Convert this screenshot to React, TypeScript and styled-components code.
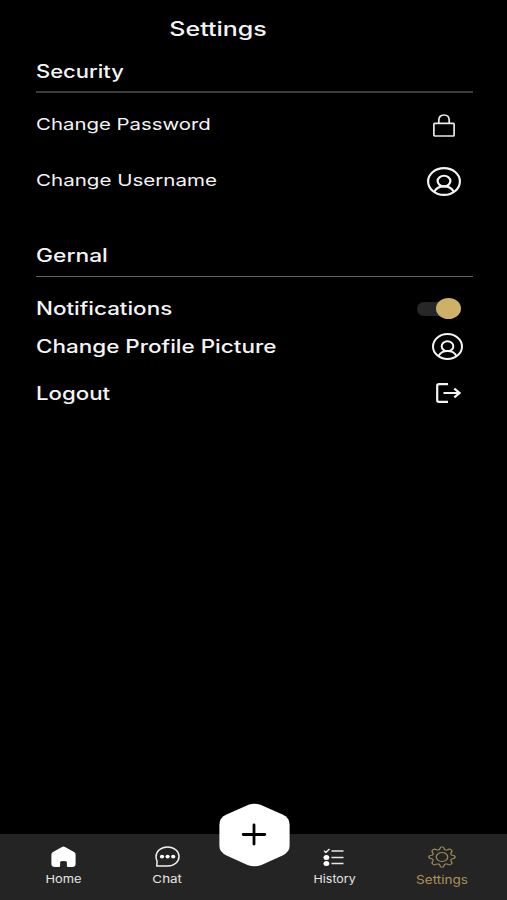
import React, {FC, ReactNode} from 'react';
import styled, {createGlobalStyle} from "styled-components";

export default function App() {
    return (
        <Screen>
            <GlobalStyle/>
            <Header>
                <Text as="h1" $size={19.5} $weight={500} $stretch={1.28} $center>Settings</Text>
            </Header>
            <Section $height={185}>
                <SectionTitle $line={2}>
                    <Text as="h2" $size={18} $weight={500} $stretch={1.22}>Security</Text>
                </SectionTitle>
                <List $top={4}>
                    <SettingsRow label="Change Password" size={16.5} weight={400} stretch={1.235} height={56} end={18}>
                        <LockIcon/>
                    </SettingsRow>
                    <SettingsRow label="Change Username" size={16.5} weight={400} stretch={1.245} height={56} end={12}>
                        <UserIcon width={34} height={29}/>
                    </SettingsRow>
                </List>
            </Section>
            <Section>
                <SectionTitle $line={1}>
                    <Text as="h2" $size={18} $weight={500} $stretch={1.265}>Gernal</Text>
                </SectionTitle>
                <List $top={13}>
                    <SettingsRow label="Notifications" size={18} weight={500} stretch={1.245} height={37} end={12}>
                        <Toggle role="switch" aria-checked="true">
                            <Thumb/>
                        </Toggle>
                    </SettingsRow>
                    <SettingsRow label="Change Profile Picture" size={18} weight={500} stretch={1.248} height={38} end={10} drop={2}>
                        <UserIcon width={31} height={27}/>
                    </SettingsRow>
                    <SettingsRow label="Logout" size={18} weight={500} stretch={1.235} height={56} end={12} drop={2}>
                        <LogoutIcon/>
                    </SettingsRow>
                </List>
            </Section>
            <NavBar>
                <NavItem $gap={5}>
                    <HomeIcon/>
                    <Text $size={11} $weight={400} $stretch={1.17} $center>Home</Text>
                </NavItem>
                <NavItem $gap={4.5}>
                    <ChatIcon/>
                    <Text $size={11} $weight={400} $stretch={1.22} $center>Chat</Text>
                </NavItem>
                <span/>
                <NavItem $gap={5} $iconShift={3}>
                    <HistoryIcon/>
                    <Text $size={11} $weight={400} $stretch={1.13} $center>History</Text>
                </NavItem>
                <NavItem $gap={6} $iconShift={2} $active>
                    <GearIcon/>
                    <Text $size={11.5} $weight={400} $stretch={1.18} $center>Settings</Text>
                </NavItem>
                <AddButton aria-label="Add">
                    <HexagonIcon/>
                </AddButton>
            </NavBar>
        </Screen>
    );
}

type TSettingsRowProps = {
    label: string
    size: number
    weight: number
    stretch: number
    height: number
    end: number
    drop?: number
    children: ReactNode
}

const SettingsRow: FC<TSettingsRowProps> = ({label, size, weight, stretch, height, end, drop, children}) => {
    return (
        <Row $height={height} $end={end}>
            <Text $size={size} $weight={weight} $stretch={stretch} $drop={drop}>{label}</Text>
            {children}
        </Row>
    );
};

const LockIcon = () => (
    <svg width="22" height="23" viewBox="0 0 22 23" fill="none" stroke="#e8e8e8" strokeWidth="1.7">
        <rect x="0.9" y="9.3" width="20.2" height="12.7" rx="0.8"/>
        <path d="M5.8 9.3V6.2C5.8 3 8 1 11 1s5.2 2 5.2 5.2v3.1"/>
    </svg>
);

const UserIcon: FC<{ width: number, height: number }> = ({width, height}) => (
    <svg width={width} height={height} viewBox="0 0 34 30" preserveAspectRatio="none" fill="none" stroke="#f4f4f4" strokeWidth="2.2">
        <ellipse cx="17" cy="15" rx="15.9" ry="13.8"/>
        <ellipse cx="17" cy="14.6" rx="6.4" ry="5.5"/>
        <path d="M7.2 25.6C9 21.8 12.8 20 17 20s8 1.8 9.8 5.6"/>
    </svg>
);

const LogoutIcon = () => (
    <svg width="25" height="20" viewBox="0 0 25 20" fill="none" stroke="#f4f4f4" strokeWidth="2.2">
        <path d="M12 1.2H3Q1.2 1.2 1.2 2.8v14.4q0 1.600 1.800 1.600h9"/>
        <path d="M7.5 10H23.5M18.3 5.7 23.5 10l-5.2 4.3"/>
    </svg>
);

const HomeIcon = () => (
    <svg width="25" height="22" viewBox="0 0 25 22" fill="#fff">
        <path d="M11 .9Q12.5.1 14 .9L23 6.1Q24.6 7 24.6 8.6V18q0 3-3.500 3H17q-1.100 0-1.100-1v-3.600q0-1.400-3.400-1.400t-3.400 1.400V20q0 1-1.100 1H3.900Q.4 21 .4 18V8.600Q.4 7 2 6.100Z"/>
    </svg>
);

const ChatIcon = () => (
    <svg width="25" height="22" viewBox="0 0 25 22" fill="none" stroke="#f0f0f0" strokeWidth="1.5">
        <path d="M1.7 20l.4-4.8C1.4 13.9 1 12.4 1 10.7 1 5.2 6 1 12.6 1S24 5.2 24 10.5 19.2 20 12.6 20Z" strokeLinejoin="round"/>
        <g fill="#fff" stroke="none">
            <ellipse cx="7" cy="10.6" rx="2.1" ry="1.9"/>
            <ellipse cx="12.6" cy="10.6" rx="2.1" ry="1.9"/>
            <ellipse cx="18.2" cy="10.6" rx="2.1" ry="1.9"/>
        </g>
    </svg>
);

const HistoryIcon = () => (
    <svg width="21" height="22" viewBox="0 -1 21 22" fill="none" stroke="#e8e8e8" strokeWidth="1.3">
        <path d="M8.5 4H20.5M8.5 10.5H20.5M8.5 16.5H20.5"/>
        <path d="M1 3.800 2.900 5.400 6.500 2" strokeWidth="1.500"/>
        <g fill="#fff" stroke="none">
            <ellipse cx="3.4" cy="10.5" rx="2.9" ry="2.5"/>
            <ellipse cx="3.4" cy="16.5" rx="2.9" ry="2.5"/>
        </g>
    </svg>
);

const GearIcon = () => (
    <svg width="28" height="23" viewBox="1 1 22 22" preserveAspectRatio="none" fill="none" stroke="#9d8c5a" strokeWidth="1" strokeLinejoin="round">
        <path d="M10.3 3.8C10.500 1 13.500 1 13.700 3.800C13.900 4.900 15.300 5.400 16.300 4.800C18.400 3 20.900 5.500 19.200 7.700C18.600 8.700 19.100 10.100 20.200 10.300C23 10.500 23 13.500 20.200 13.700C19.100 13.900 18.600 15.300 19.200 16.300C20.900 18.500 18.400 21 16.300 19.200C15.300 18.600 13.900 19.100 13.700 20.200C13.500 23 10.500 23 10.300 20.200C10.100 19.100 8.700 18.600 7.700 19.200C5.600 21 3.100 18.500 4.800 16.300C5.400 15.300 4.900 13.900 3.800 13.700C1 13.500 1 10.500 3.800 10.300C4.900 10.100 5.400 8.700 4.800 7.700C3.100 5.500 5.600 3 7.700 4.800C8.700 5.400 10.100 4.900 10.300 3.800Z"/>
        <circle cx="12" cy="12" r="4.5"/>
    </svg>
);

const HexagonIcon = () => (
    <svg width="71" height="64" viewBox="0 0 71 64">
        <path d="M29.500 1.700Q35.500-.300 41.500 1.700L63.500 11.600Q70.600 14.900 70.600 21.500V43Q70.600 49.100 63.500 52.400L42.500 62.100Q35.500 64.500 28.500 62.100L7.500 52.400Q.400 49.100.400 43V21.500Q.400 14.900 7.500 11.600Z" fill="#fff"/>
        <path d="M24.200 31.500H45.800M35 22V41" stroke="#000" strokeWidth="2.8" strokeLinecap="round"/>
    </svg>
);

const GlobalStyle = createGlobalStyle`
  * {
    box-sizing: border-box;
    margin: 0;
    padding: 0;
  }

  body {
    background-color: #000;
    font-family: Inter, "Liberation Sans", sans-serif;
  }
`

const Screen = styled.main`
  width: 507px;
  height: 900px;
  display: flex;
  flex-direction: column;
  background-color: #000;
  color: #f4f4f4;
  overflow: hidden;
`

const Text = styled.span<{ $size: number, $weight: number, $stretch: number, $center?: boolean, $drop?: number }>`
  display: block;
  padding-top: ${({$drop}) => $drop || 0}px;
  font-size: ${({$size}) => $size}px;
  font-weight: ${({$weight}) => $weight};
  line-height: 1.2;
  white-space: nowrap;
  transform: scaleX(${({$stretch}) => $stretch});
  transform-origin: ${({$center}) => $center ? "center" : "left"};
`

const Header = styled.header`
  height: 58px;
  padding-top: 2px;
  padding-right: 71px;
  display: flex;
  align-items: center;
  justify-content: center;
`

const Section = styled.section<{ $height?: number }>`
  margin: 0 34px 0 36px;
  ${({$height}) => $height && `height: ${$height}px;`}
`

const SectionTitle = styled.div<{ $line: number }>`
  height: ${({$line}) => 33 + $line}px;
  padding-top: ${({$line}) => $line === 2 ? 3 : 2}px;
  border-bottom: ${({$line}) => $line}px solid ${({$line}) => $line === 2 ? "#3c3c3c" : "#626262"};
`

const List = styled.ul<{ $top: number }>`
  padding-top: ${({$top}) => $top}px;
  list-style: none;
`

const Row = styled.li<{ $height: number, $end: number }>`
  height: ${({$height}) => $height}px;
  padding-right: ${({$end}) => $end}px;
  display: flex;
  align-items: center;
  justify-content: space-between;
`

const Toggle = styled.div`
  width: 44px;
  height: 14px;
  border-radius: 7px;
  background: linear-gradient(to right, #272727 34px, transparent 34px);
  display: flex;
  align-items: center;
  justify-content: flex-end;
`

const Thumb = styled.span`
  flex: none;
  width: 25px;
  height: 21px;
  border-radius: 50%;
  background-color: #cdb16b;
`

const NavBar = styled.nav`
  position: relative;
  height: 66px;
  margin-top: auto;
  padding-left: 10px;
  display: grid;
  grid-template-columns: 106px 102px 73px 87px 129px;
  background-color: #242424;
`

const NavItem = styled.a<{ $active?: boolean, $gap: number, $iconShift?: number }>`
  padding-top: 12px;
  display: flex;
  flex-direction: column;
  align-items: center;
  gap: ${({$gap}) => $gap}px;
  color: ${({$active}) => $active ? "#a8935a" : "#e4e4e4"};

  & svg {
    flex: none;
    height: 22px;
    margin-right: ${({$iconShift}) => $iconShift || 0}px;
  }
`

const AddButton = styled.button`
  position: absolute;
  left: 219px;
  top: -31px;
  width: 71px;
  height: 64px;
  border: none;
  background: none;
`
